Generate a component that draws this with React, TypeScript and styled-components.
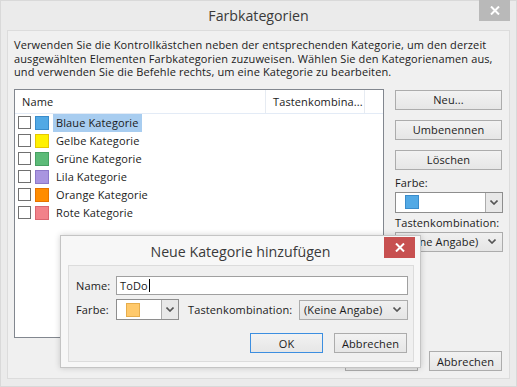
import styled, { createGlobalStyle } from "styled-components";

const Global = createGlobalStyle`
  html, body {
    margin: 0;
    padding: 0;
    background: #ebebeb;
  }
  body {
    font-family: "Open Sans", "Noto Sans", sans-serif;
    font-size: 11px;
    letter-spacing: 0.12px;
    color: #1b1b1b;
  }
`;

const Window = styled.div`
  position: relative;
  width: 517px;
  height: 387px;
  box-sizing: border-box;
  background: #ebebeb;
  border: 1px solid #d9d9d9;
  display: flex;
  flex-direction: column;
`;

const TitleBar = styled.div<{ $height: number }>`
  display: grid;
  grid-template-columns: 1fr auto 1fr;
  height: ${(p) => p.$height}px;
  flex-shrink: 0;
`;

const Title = styled.div<{ $top: number }>`
  grid-column: 2;
  font-size: 14.2px;
  letter-spacing: 0;
  color: #3a3a3a;
  padding-top: ${(p) => p.$top}px;
  line-height: 20px;
  white-space: nowrap;
`;

const CloseButton = styled.div<{ $red?: boolean }>`
  grid-column: 3;
  justify-self: end;
  align-self: start;
  width: 31px;
  height: 21px;
  margin-right: ${(p) => (p.$red ? 5 : 6)}px;
  margin-top: ${(p) => (p.$red ? 1 : -1)}px;
  background: ${(p) => (p.$red ? "#c75050" : "#b9b9b9")};
  display: flex;
  align-items: center;
  justify-content: center;
`;

const Frame = styled.div`
  flex: 1;
  margin: 0 6px 7px 6px;
  border: 1px solid #dcdcdc;
  background: #f0f0f0;
  padding: 7px 6px 7px 6px;
  display: flex;
  flex-direction: column;
`;

const Description = styled.p`
  margin: 0;
  line-height: 13.5px;
  white-space: nowrap;
`;

const Content = styled.div`
  display: flex;
  gap: 11px;
  margin-top: 10px;
  height: 249px;
`;

const ListBox = styled.div`
  width: 370px;
  box-sizing: border-box;
  border: 1px solid #82878f;
  background: #fff;
  display: flex;
  flex-direction: column;
`;

const HeaderRow = styled.div`
  display: grid;
  grid-template-columns: 251px 99px 1fr;
  height: 24px;
  box-sizing: border-box;
  border-bottom: 1px solid #e3ebf6;
`;

const HeaderCell = styled.div`
  display: flex;
  align-items: center;
  padding-left: 7px;
  white-space: nowrap;
  border-right: 1px solid #e6ebf2;
  &:last-child {
    border-right: none;
  }
`;

const Rows = styled.div`
  display: flex;
  flex-direction: column;
  padding-left: 3px;
`;

const Row = styled.div`
  display: flex;
  align-items: center;
  height: 18px;
`;

const Checkbox = styled.span`
  width: 13px;
  height: 13px;
  box-sizing: border-box;
  border: 1px solid #707070;
  background: #fff;
  margin-right: 4px;
`;

const Swatch = styled.span<{ $color: string; $border: string }>`
  width: 14px;
  height: 14px;
  box-sizing: border-box;
  background: ${(p) => p.$color};
  border: 1px solid ${(p) => p.$border};
`;

const RowLabel = styled.span<{ $selected?: boolean }>`
  margin-left: 4px;
  padding: 0 3px;
  height: 18px;
  line-height: 18px;
  white-space: nowrap;
  background: ${(p) => (p.$selected ? "#a8cdf0" : "transparent")};
`;

const Side = styled.div`
  width: 108px;
  display: flex;
  flex-direction: column;
  padding-top: 1px;
`;

const Button = styled.div<{ $default?: boolean; $width?: number }>`
  width: ${(p) => (p.$width ? `${p.$width}px` : "107px")};
  height: 20px;
  box-sizing: border-box;
  border: 1px solid ${(p) => (p.$default ? "#3c8ee0" : "#acacac")};
  background: linear-gradient(#f2f2f2, #e6e6e6);
  display: flex;
  align-items: center;
  justify-content: center;
  line-height: 1;
`;

const SideButtons = styled.div`
  display: flex;
  flex-direction: column;
  gap: 10px;
`;

const FieldLabel = styled.div<{ $top: number }>`
  line-height: 14px;
  margin-top: ${(p) => p.$top}px;
  margin-bottom: 2px;
  white-space: nowrap;
`;

const ColorSelect = styled.div<{ $width: number; $height: number }>`
  width: ${(p) => p.$width}px;
  height: ${(p) => p.$height}px;
  box-sizing: border-box;
  border: 1px solid #8e8e8e;
  background: #fff;
  display: flex;
  align-items: center;
  flex-shrink: 0;
`;

const SelectSwatch = styled.span<{ $color: string; $border: string; $left: number }>`
  width: 14px;
  height: 14px;
  box-sizing: border-box;
  margin-left: ${(p) => p.$left}px;
  background: ${(p) => p.$color};
  border: 1px solid ${(p) => p.$border};
`;

const ArrowPart = styled.span`
  margin-left: auto;
  width: 17px;
  height: 100%;
  box-sizing: border-box;
  border-left: 1px solid #acacac;
  background: #e8e8e8;
  display: flex;
  align-items: center;
  justify-content: center;
`;

const ComboBox = styled.div<{ $width: number }>`
  width: ${(p) => p.$width}px;
  height: 20px;
  box-sizing: border-box;
  border: 1px solid #acacac;
  background: linear-gradient(#f0f0f0, #e5e5e5);
  display: flex;
  align-items: center;
  padding: 0 6px 0 4px;
  justify-content: space-between;
  white-space: nowrap;
  flex-shrink: 0;
`;

const Footer = styled.div`
  display: flex;
  justify-content: flex-end;
  gap: 11px;
  margin-top: auto;
  padding-right: 1px;
`;

/* ---------- dialog ---------- */

const Dialog = styled.div`
  position: absolute;
  left: 59px;
  top: 234px;
  width: 361px;
  height: 133px;
  box-sizing: border-box;
  background: #f7f7f7;
  border: 1px solid #c4c4c4;
  box-shadow: 0 0 6px rgba(0, 0, 0, 0.18);
  display: flex;
  flex-direction: column;
`;

const DialogFrame = styled.div`
  flex: 1;
  margin: 0 6px 5px 7px;
  border: 1px solid #dcdcdc;
  background: #f0f0f0;
  padding: 10px 5px 0 7px;
  display: flex;
  flex-direction: column;
`;

const FormRow = styled.div<{ $gap?: number }>`
  display: flex;
  align-items: center;
  margin-top: ${(p) => p.$gap ?? 0}px;
`;

const FormLabel = styled.span<{ $width?: number; $left?: number }>`
  width: ${(p) => (p.$width ? `${p.$width}px` : "auto")};
  margin-left: ${(p) => p.$left ?? 0}px;
  flex-shrink: 0;
  white-space: nowrap;
`;

const TextInput = styled.div`
  flex: 1;
  height: 19px;
  box-sizing: border-box;
  border: 1px solid #a0a0a0;
  background: #fff;
  display: flex;
  align-items: center;
  padding-left: 3px;
`;

const Caret = styled.span`
  width: 1px;
  height: 13px;
  background: #000;
  margin-left: 1px;
`;

const DialogButtons = styled.div`
  display: flex;
  justify-content: flex-end;
  gap: 11px;
  margin-top: 13px;
  padding-right: 1px;
`;

function Cross() {
  return (
    <svg width="10" height="9" viewBox="0 0 10 9">
      <path d="M1 0.5 L9 8.5 M9 0.5 L1 8.5" stroke="#fff" strokeWidth="2" />
    </svg>
  );
}

function Chevron() {
  return (
    <svg width="8" height="5" viewBox="0 0 8 5">
      <path d="M0.5 0.5 L4 4 L7.5 0.5" stroke="#555" strokeWidth="1.6" fill="none" />
    </svg>
  );
}

const categories = [
  { name: "Blaue Kategorie", color: "#52a9e5", border: "#3a8ccb" },
  { name: "Gelbe Kategorie", color: "#fff100", border: "#e6c700" },
  { name: "Grüne Kategorie", color: "#5cbb78", border: "#47a062" },
  { name: "Lila Kategorie", color: "#a995e0", border: "#8c78c9" },
  { name: "Orange Kategorie", color: "#ff8c00", border: "#e67300" },
  { name: "Rote Kategorie", color: "#f2828a", border: "#da6670" },
];

function App() {
  return (
    <>
      <Global />
      <Window>
        <TitleBar $height={29}>
          <Title $top={5}>Farbkategorien</Title>
          <CloseButton>
            <Cross />
          </CloseButton>
        </TitleBar>
        <Frame>
          <Description>
            Verwenden Sie die Kontrollkästchen neben der entsprechenden Kategorie, um den derzeit
            <br />
            ausgewählten Elementen Farbkategorien zuzuweisen. Wählen Sie den Kategorienamen aus,
            <br />
            und verwenden Sie die Befehle rechts, um eine Kategorie zu bearbeiten.
          </Description>
          <Content>
            <ListBox>
              <HeaderRow>
                <HeaderCell>Name</HeaderCell>
                <HeaderCell>Tastenkombina...</HeaderCell>
                <HeaderCell />
              </HeaderRow>
              <Rows>
                {categories.map((c, i) => (
                  <Row key={c.name}>
                    <Checkbox />
                    <Swatch $color={c.color} $border={c.border} />
                    <RowLabel $selected={i === 0}>{c.name}</RowLabel>
                  </Row>
                ))}
              </Rows>
            </ListBox>
            <Side>
              <SideButtons>
                <Button>Neu...</Button>
                <Button>Umbenennen</Button>
                <Button>Löschen</Button>
              </SideButtons>
              <FieldLabel $top={6}>Farbe:</FieldLabel>
              <ColorSelect $width={108} $height={21}>
                <SelectSwatch $color="#52a9e5" $border="#3a8ccb" $left={9} />
                <ArrowPart>
                  <Chevron />
                </ArrowPart>
              </ColorSelect>
              <FieldLabel $top={3}>Tastenkombination:</FieldLabel>
              <ComboBox $width={108}>
                <span>(Keine Angabe)</span>
                <Chevron />
              </ComboBox>
            </Side>
          </Content>
          <Footer>
            <Button $width={73}>OK</Button>
            <Button $width={73}>Abbrechen</Button>
          </Footer>
        </Frame>

        <Dialog>
          <TitleBar $height={29}>
            <Title $top={6}>Neue Kategorie hinzufügen</Title>
            <CloseButton $red>
              <Cross />
            </CloseButton>
          </TitleBar>
          <DialogFrame>
            <FormRow>
              <FormLabel $width={40}>Name:</FormLabel>
              <TextInput>
                ToDo
                <Caret />
              </TextInput>
            </FormRow>
            <FormRow $gap={4}>
              <FormLabel $width={40}>Farbe:</FormLabel>
              <ColorSelect $width={63} $height={21}>
                <SelectSwatch $color="#ffc96b" $border="#e6ad4c" $left={9} />
                <ArrowPart>
                  <Chevron />
                </ArrowPart>
              </ColorSelect>
              <FormLabel $left={9}>Tastenkombination:</FormLabel>
              <ComboBox $width={109} style={{ marginLeft: "auto" }}>
                <span>(Keine Angabe)</span>
                <Chevron />
              </ComboBox>
            </FormRow>
            <DialogButtons>
              <Button $default $width={73}>
                OK
              </Button>
              <Button $width={73}>Abbrechen</Button>
            </DialogButtons>
          </DialogFrame>
        </Dialog>
      </Window>
    </>
  );
}

export default App;
